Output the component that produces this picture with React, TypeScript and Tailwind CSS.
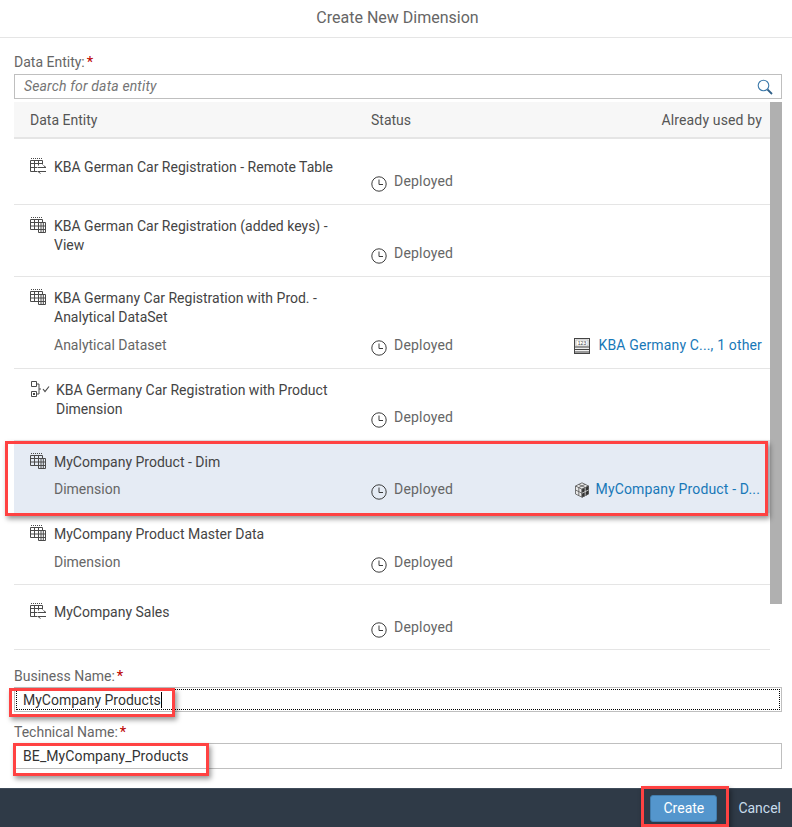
import type { ReactNode } from 'react';

type Row = {
  title: string[];
  subtitle?: string;
  icon: ReactNode;
  used?: { icon: ReactNode; label: string; end: string };
  size: string;
  titleGap: string;
  statusGap: string;
  subGap?: string;
  textLeft?: string;
  selected?: boolean;
};

function RemoteTableIcon() {
  return (
    <svg width="17" height="16" viewBox="0 0 17 16" fill="none" stroke="#4a4a4a" strokeWidth="1" className="block">
      <path d="M1 .5h1M3 .5h1M5 .5h1M7 .5h1M9 .5h1M11 .5h1" />
      <path d="M.5 13.500v-11h12v4M.5 5.500h12M.5 9.500h7M4.500 2.500v11M8.500 2.500v5M.5 13.500h7" />
      <path d="M8 9.500h8M13.500 7.500l2.500 2M8 13.500h8M8 13.500l2.500 2" />
    </svg>
  );
}

function ViewIcon() {
  return (
    <svg width="16" height="16" viewBox="0 0 16 16" fill="none" stroke="#4a4a4a" strokeWidth="1" className="block">
      <path d="M1 .5h1M3 .5h1M5 .5h1M7 .5h1M9 .5h1M11 .5h1" />
      <path d="M.5 12.500v-10h12v3M.5 5.500h8M.5 9h8M4.500 2.500v10M.5 12.500h8M8.500 2.500v3" />
      <path d="M8.500 5.500h7v10h-7zM8.500 9h7M8.500 12.500h7M11 5.500v10M13.300 5.500v10" />
    </svg>
  );
}

function LineageIcon() {
  return (
    <svg width="20" height="16" viewBox="0 0 20 16" fill="none" stroke="#4a4a4a" strokeWidth="1" className="block">
      <path d="M1.500 .5h5v5h-5zM1.500 10.500h5v5h-5z" />
      <rect x="3" y="12" width="2" height="2" fill="#4a4a4a" stroke="none" />
      <path d="M6.500 3h2.500v10h-2.500M9 8h2" />
      <path d="M13 8l2 2.500l4 -5" strokeWidth="1.200" />
    </svg>
  );
}

function ClockIcon() {
  return (
    <svg width="16" height="16" viewBox="0 0 16 16" fill="none" stroke="#3d3d3d" strokeWidth="1" className="block shrink-0 translate-y-[2px]">
      <circle cx="8" cy="8" r="7.200" />
      <path d="M8 3.500v5h4" />
    </svg>
  );
}

function FactIcon() {
  return (
    <svg width="16" height="16" viewBox="0 0 16 16" fill="none" className="block">
      <rect x=".5" y=".5" width="15" height="15" fill="#f0f0f0" stroke="#444" />
      <path d="M.5 9h15M.5 11.500h15M.5 14h15" stroke="#444" />
      <rect x="2" y="2" width="12" height="6" fill="#fff" stroke="#888" strokeWidth=".5" />
      <text x="8" y="7" textAnchor="middle" fontSize="5" fill="#444" fontFamily="'Liberation Sans', sans-serif">123</text>
    </svg>
  );
}

function CubeIcon() {
  return (
    <svg width="16" height="16" viewBox="0 0 16 16" fill="none" stroke="#555" strokeWidth=".8" className="block">
      <path d="M8 .8l6.500 3.200v8l-6.500 3.200l-6.500 -3.200v-8z" fill="#e8e8e8" />
      <path d="M1.500 4l6.500 3.200l6.500 -3.200M8 7.200v8M4.800 2.400l6.500 3.200M11.200 2.400l-6.500 3.200M1.500 8l6.500 3.200M4.800 5.600v8" />
      <path d="M8 7.200l6.500 -3.200v8l-6.500 3.200z" fill="#333" />
      <path d="M8 11.200l6.500 -3.200M11.200 5.600v8" stroke="#ddd" />
    </svg>
  );
}

function SearchIcon() {
  return (
    <svg width="16" height="16" viewBox="0 0 16 16" fill="none" className="block">
      <circle cx="6.500" cy="6.500" r="5.300" stroke="#3f7cac" strokeWidth="1.100" />
      <path d="M10.500 10.500l4.500 4.500" stroke="#2f5f88" strokeWidth="1.800" />
    </svg>
  );
}

const rows: Row[] = [
  { title: ['KBA German Car Registration - Remote Table'], icon: <RemoteTableIcon />, size: 'h-[66px]', titleGap: 'pt-[19px]', statusGap: 'mb-[13px]' },
  { title: ['KBA German Car Registration (added keys) -', 'View'], icon: <ViewIcon />, size: 'h-[72px]', titleGap: 'pt-[12px]', statusGap: 'mb-[13px]' },
  {
    title: ['KBA Germany Car Registration with Prod. -', 'Analytical DataSet'],
    subtitle: 'Analytical Dataset',
    icon: <ViewIcon />,
    size: 'h-[92px]',
    titleGap: 'pt-[12px]',
    statusGap: 'mb-[13px]',
    subGap: 'mt-[9px]',
    used: { icon: <FactIcon />, label: 'KBA Germany C..., 1 other', end: 'gap-[9px] pr-[8px]' },
  },
  {
    title: ['KBA Germany Car Registration with Product', 'Dimension'],
    icon: <LineageIcon />,
    size: 'h-[72px]',
    titleGap: 'pt-[12px]',
    statusGap: 'mb-[13px]',
    textLeft: 'ml-[2px]',
  },
  {
    title: ['MyCompany Product - Dim'],
    subtitle: 'Dimension',
    icon: <ViewIcon />,
    size: 'h-[72px]',
    titleGap: 'pt-[12px]',
    statusGap: 'mb-[13px]',
    subGap: 'mt-[8px]',
    selected: true,
    used: { icon: <CubeIcon />, label: 'MyCompany Product - D...', end: 'gap-[6px] pr-[10px]' },
  },
  {
    title: ['MyCompany Product Master Data'],
    subtitle: 'Dimension',
    icon: <ViewIcon />,
    size: 'h-[72px]',
    titleGap: 'pt-[12px]',
    statusGap: 'mb-[12px]',
    subGap: 'mt-[9px]',
  },
  { title: ['MyCompany Sales'], icon: <RemoteTableIcon />, size: 'h-[65px]', titleGap: 'pt-[18px]', statusGap: 'mb-[12px]' },
];

function Required({ label }: { label: string }) {
  return (
    <div className="flex h-[19px] items-center text-[14px] text-[#666]">
      {label}
      <span className="ml-[2px] text-[15px] text-[#bb0000]">*</span>
    </div>
  );
}

function AnnotationBox({ className }: { className: string }) {
  return <div className={`pointer-events-none absolute border-[3px] border-[#ff4242] shadow-[2px_3px_5px_rgba(0,0,0,0.4)] ${className}`} />;
}

export default function App() {
  return (
    <div className="relative flex h-[827px] w-[792px] flex-col overflow-hidden bg-white font-['Roboto',sans-serif] text-[14px] text-[#444]">
      <header className="flex h-[38px] shrink-0 items-center justify-center border-b border-[#e5e5e5] pb-[1px] pl-[3px] text-[16px] text-[#666]">
        Create New Dimension
      </header>

      <div className="flex flex-1 flex-col pl-[14px] pr-[10px]">
        <div className="mt-[15px]">
          <Required label="Data Entity:" />
        </div>
        <div className="mt-[2px] flex h-[25px] items-center justify-between border border-[#bfbfbf] pl-[9px] pr-[8px]">
          <span className="italic tracking-[0.15px] text-[#757575]">Search for data entity</span>
          <SearchIcon />
        </div>

        <div className="mt-[3px] flex">
          <div className="min-w-0 flex-1">
            <div className="flex h-[37px] items-center border-b-2 border-[#e5e5e5] bg-[#f7f7f7] pt-[1px] text-[#555]">
              <div className="w-[357px] pl-[16px]">Data Entity</div>
              <div>Status</div>
              <div className="ml-auto pr-[8px] tracking-[0.15px]">Already used by</div>
            </div>
            {rows.map((row) => (
              <div
                key={row.title[0]}
                className={`relative flex border-b ${row.size} ${row.selected ? 'border-[#e5ebf4] bg-[#e5ebf4]' : 'border-[#e5e5e5]'}`}
              >
                <div className={`w-[357px] pl-[16px] ${row.titleGap}`}>
                  <div className="flex">
                    <div className="w-[24px] shrink-0">{row.icon}</div>
                    <div className={`leading-[19px] ${row.textLeft ?? ''}`}>
                      {row.title.map((line) => (
                        <div key={line}>{line}</div>
                      ))}
                      {row.subtitle && <div className={`${row.subGap} text-[#666]`}>{row.subtitle}</div>}
                    </div>
                  </div>
                </div>
                <div className={`${row.statusGap} mt-auto flex h-[19px] items-center`}>
                  <ClockIcon />
                  <span className="ml-[7px] tracking-[0.2px] text-[#666]">Deployed</span>
                </div>
                {row.used && (
                  <div className={`${row.statusGap} ${row.used.end} ml-auto mt-auto flex h-[19px] items-center`}>
                    {row.used.icon}
                    <span className="tracking-[0.15px] text-[#1878b8]">{row.used.label}</span>
                  </div>
                )}
              </div>
            ))}
          </div>
          <div className="w-[12px] shrink-0">
            <div className="h-[502px] bg-[#b0b0b0]" />
          </div>
        </div>

        <div className="mt-[17px]">
          <Required label="Business Name:" />
        </div>
        <div className="mt-[1px] flex h-[25px] items-center border border-[#bfbfbf] p-[1px]">
          <div className="flex h-full w-full items-center border border-dotted border-black pl-[6px] pt-[1px] text-[#333]">
            MyCompany Products
            <span className="h-[16px] w-px bg-black" />
          </div>
        </div>
        <div className="mt-[11px]">
          <Required label="Technical Name:" />
        </div>
        <div className="mt-[1px] flex h-[26px] items-center border border-[#bfbfbf] pl-[8px] pt-[1px] tracking-[0.1px] text-[#333]">BE_MyCompany_Products</div>
      </div>

      <footer className="flex h-[39px] shrink-0 items-center justify-end border-t border-[#3f4c5a] bg-[#2f3a47] pr-[11px]">
        <button className="h-[27px] w-[67px] rounded-[3px] border border-[#427cac] bg-[#5496cd] text-[14px] text-white">Create</button>
        <button className="ml-[21px] text-[14px] text-[#c8dcec]">Cancel</button>
      </footer>

      <AnnotationBox className="left-[5px] top-[441px] h-[75px] w-[763px]" />
      <AnnotationBox className="left-[9px] top-[688px] h-[29px] w-[166px]" />
      <AnnotationBox className="left-[13px] top-[743px] h-[33px] w-[196px]" />
      <AnnotationBox className="left-[641px] top-[786px] h-[41px] w-[88px]" />
    </div>
  );
}
